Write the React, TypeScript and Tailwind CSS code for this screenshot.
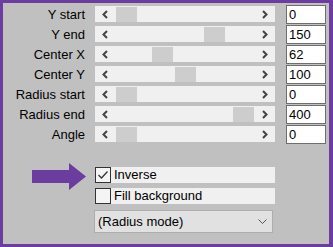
const rows = [
  { label: "Y start", value: "0", thumb: 21 },
  { label: "Y end", value: "150", thumb: 109 },
  { label: "Center X", value: "62", thumb: 57 },
  { label: "Center Y", value: "100", thumb: 80 },
  { label: "Radius start", value: "0", thumb: 21 },
  { label: "Radius end", value: "400", thumb: 138 },
  { label: "Angle", value: "0", thumb: 21 },
];

function Chevron({ dir }: { dir: "left" | "right" }) {
  return (
    <svg width="6" height="9" viewBox="0 0 6 9" className="shrink-0">
      <polyline
        points={dir === "left" ? "5,1 1.5,4.5 5,8" : "1,1 4.5,4.5 1,8"}
        fill="none"
        stroke="#444"
        strokeWidth="2"
      />
    </svg>
  );
}

function Slider({ thumb }: { thumb: number }) {
  return (
    <div className="relative w-[180px] h-[16px] bg-[#f0f0f0] flex items-center justify-between pl-[7px] pr-[7px]">
      <Chevron dir="left" />
      <div className="absolute top-[1px] h-[15px] w-[21px] bg-[#cdcdcd]" style={{ left: thumb }} />
      <Chevron dir="right" />
    </div>
  );
}

export default function App() {
  return (
    <div className="w-[333px] h-[247px] bg-[#6a3d9f] pt-[3px] pl-[3px] pr-[4px] pb-[3px] font-['Liberation_Sans',Arial,sans-serif] text-[13px] text-black">
      <div className="h-full bg-[#c0c0c0] pt-[1px]">
        {/* slider rows */}
        <div className="flex flex-col">
          {rows.map((r) => (
            <div key={r.label} className="flex items-center h-[20px]">
              <div className="w-[82px] text-right leading-none">{r.label}</div>
              <div className="ml-[10px]">
                <Slider thumb={r.thumb} />
              </div>
              <div className="ml-[11px] w-[40px] h-[19px] bg-white border border-[#6e6e6e] pl-[2px] leading-[17px]">
                {r.value}
              </div>
            </div>
          ))}
        </div>

        {/* checkboxes */}
        <div className="relative mt-[23px] ml-[92px] flex flex-col gap-[5px]">
          <div className="flex items-center h-[16px]">
            <div className="w-[16px] h-[16px] bg-[#f4f4f4] border border-[#333] flex items-center justify-center">
              <svg width="12" height="10" viewBox="0 0 12 10">
                <polyline points="1.5,5 4.5,8 10.5,1.5" fill="none" stroke="#333" strokeWidth="1.3" />
              </svg>
            </div>
            <div className="w-[164px] h-[16px] bg-[#f0f0f0] pl-[3px] leading-[16px]">Inverse</div>
          </div>
          <div className="flex items-center h-[16px]">
            <div className="w-[16px] h-[16px] bg-[#f4f4f4] border border-[#333]" />
            <div className="w-[164px] h-[16px] bg-[#f0f0f0] pl-[3px] leading-[16px]">Fill background</div>
          </div>
          <svg width="54" height="28" viewBox="0 0 54 28" className="absolute left-[-63px] top-[-4px]">
            <polygon points="0,7 37,7 37,0 54,13.5 37,27 37,20 0,20" fill="#6a3d9f" />
          </svg>
        </div>

        {/* dropdown */}
        <div className="mt-[6px] ml-[91px] w-[179px] h-[23px] bg-[#e1e1e1] border border-[#adadad] flex items-center justify-between pl-[3px] pr-[5px]">
          <span>(Radius mode)</span>
          <svg width="9" height="5" viewBox="0 0 9 5">
            <polyline points="0.5,0.5 4.5,4.5 8.5,0.5" fill="none" stroke="#555" strokeWidth="1" />
          </svg>
        </div>
      </div>
    </div>
  );
}
